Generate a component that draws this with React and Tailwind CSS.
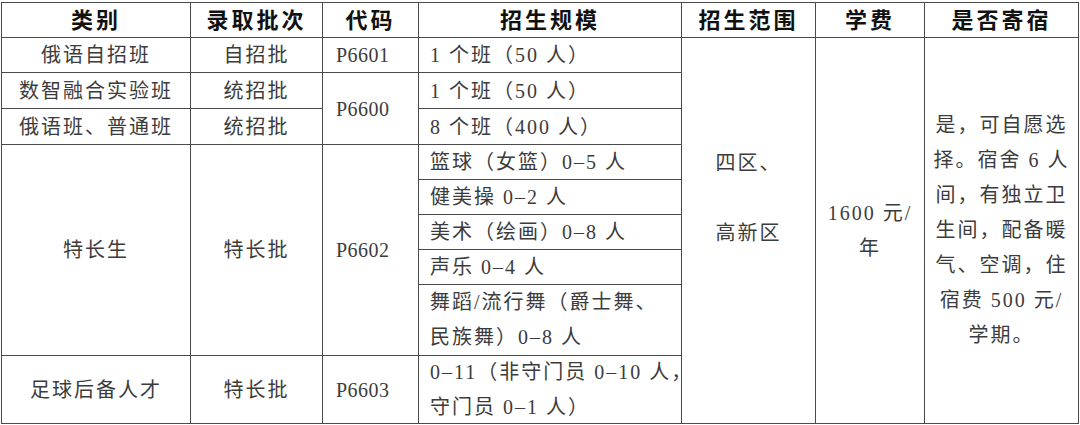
import React from 'react';

const cell = 'border-r border-b border-[#4a4a4a] flex items-center';
const center = `${cell} justify-center text-center`;

const Lines = ({ lines, className = '' }) => (
  <div className={`flex flex-col ${className}`}>
    {lines.map((l, i) => (
      <span key={i} className="leading-[35px] whitespace-nowrap">
        {l || '\u00a0'}
      </span>
    ))}
  </div>
);

const headers = ['类别', '录取批次', '代码', '招生规模', '招生范围', '学费', '是否寄宿'];

const App = () => {
  return (
    <div className="w-[1080px] h-[425px] bg-white pt-[2px] pl-px font-['Liberation_Serif','Noto_Sans_CJK_SC',serif] text-[20px] tracking-[2px] text-[#3c3c3c]">
      <div className="grid grid-cols-[189px_132px_96px_263px_134px_109px_154px] grid-rows-[35px_35px_36px_36px_35px_35px_35px_35px_71px_68px] w-[1078px] border-t border-l border-[#4a4a4a]">
        {/* header */}
        {headers.map((h) => (
          <div key={h} className={`${center} text-[22px] font-bold tracking-[3px] text-[#111]`}>
            {h}
          </div>
        ))}

        {/* 俄语自招班 */}
        <div className={center}>俄语自招班</div>
        <div className={center}>自招批</div>
        <div className={`${cell} pl-[13px] tracking-[0.5px]`}>P6601</div>
        <div className={`${cell} pl-[11px]`}>1 个班（50 人）</div>
        <div className={`${center} row-span-9 flex-col pb-[65px]`}>
          <Lines lines={['四区、', '', '高新区']} className="items-center" />
        </div>
        <div className={`${center} row-span-9 flex-col`}>
          <Lines lines={['1600 元/', '年']} className="items-center" />
        </div>
        <div className={`${center} row-span-9 flex-col`}>
          <Lines
            lines={[
              '是，可自愿选',
              '择。宿舍 6 人',
              '间，有独立卫',
              '生间，配备暖',
              '气、空调，住',
              '宿费 500 元/',
              '学期。',
            ]}
            className="items-center"
          />
        </div>

        {/* 数智融合实验班 */}
        <div className={center}>数智融合实验班</div>
        <div className={center}>统招批</div>
        <div className={`${cell} row-span-2 pl-[13px] tracking-[0.5px]`}>P6600</div>
        <div className={`${cell} pl-[11px]`}>1 个班（50 人）</div>

        {/* 俄语班、普通班 */}
        <div className={center}>俄语班、普通班</div>
        <div className={center}>统招批</div>
        <div className={`${cell} pl-[11px]`}>8 个班（400 人）</div>

        {/* 特长生 */}
        <div className={`${center} row-span-5`}>特长生</div>
        <div className={`${center} row-span-5`}>特长批</div>
        <div className={`${cell} row-span-5 pl-[13px] tracking-[0.5px]`}>P6602</div>
        <div className={`${cell} pl-[11px]`}>篮球（女篮）0–5 人</div>
        <div className={`${cell} pl-[11px]`}>健美操 0–2 人</div>
        <div className={`${cell} pl-[11px]`}>美术（绘画）0–8 人</div>
        <div className={`${cell} pl-[11px]`}>声乐 0–4 人</div>
        <div className={`${cell} pl-[11px]`}>
          <Lines lines={['舞蹈/流行舞（爵士舞、', '民族舞）0–8 人']} />
        </div>

        {/* 足球后备人才 */}
        <div className={center}>足球后备人才</div>
        <div className={center}>特长批</div>
        <div className={`${cell} pl-[13px] tracking-[0.5px]`}>P6603</div>
        <div className={`${cell} pl-[11px]`}>
          <Lines lines={['0–11（非守门员 0–10 人，', '守门员 0–1 人）']} />
        </div>
      </div>
    </div>
  );
};

export default App;
